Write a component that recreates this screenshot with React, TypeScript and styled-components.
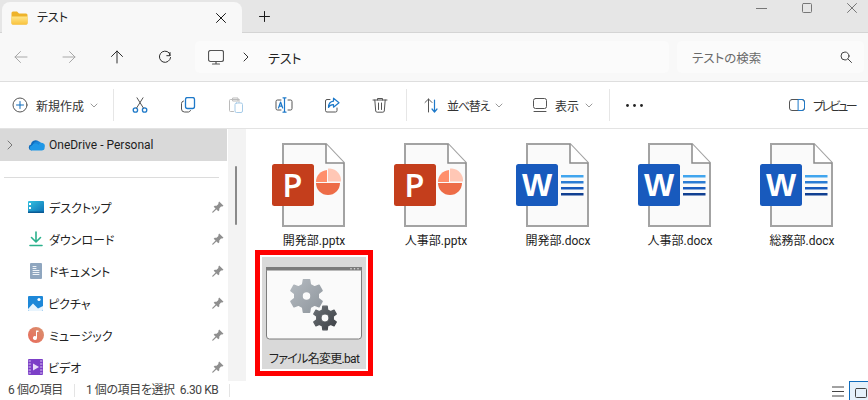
import React from "react";
import styled, { createGlobalStyle } from "styled-components";

const Global = createGlobalStyle`
  html, body { margin: 0; padding: 0; background: #fff; overflow: hidden; }
  * { box-sizing: border-box; }
  body { font-family: Roboto, "Noto Sans CJK JP", sans-serif; font-feature-settings: "palt"; font-size: 12px; color: #1b1b1b; }
`;

const Page = styled.div`width: 868px; height: 400px; display: flex; flex-direction: column; overflow: hidden;`;

const TitleBar = styled.div`height: 33px; flex: none; background: #e6e6e6; border-bottom: 1px solid #d4d4d4; display: flex; align-items: flex-start;`;
const Tab = styled.div`width: 240px; height: 31px; margin: 2px 0 0 2px; background: #f8f8f8; border-radius: 8px 8px 0 0; display: flex; align-items: center; padding: 0 16px 0 9px; position: relative; z-index: 1;`;
const TabTitle = styled.span`flex: 1; margin-left: 9px; font-size: 12px; line-height: 16px; color: #222;`;
const NewTab = styled.div`width: 44px; height: 32px; display: flex; align-items: center; justify-content: center;`;
const WindowControls = styled.div`margin-left: auto; display: flex; gap: 34px; height: 16px; align-items: center; padding-right: 11px; color: #777;`;
const WinBtn = styled.div`width: 11px; display: flex; justify-content: center;`;

const NavRow = styled.div`height: 49px; flex: none; background: #f8f8f8; border-bottom: 1px solid #dedede; display: flex; align-items: center; gap: 6px;`;
const NavBtn = styled.div<{ $off?: boolean }>`width: 42px; display: flex; justify-content: center; color: ${p => (p.$off ? "#a8a8a8" : "#2e2e2e")};`;
const AddressBox = styled.div`width: 474px; height: 32px; margin-left: 3px; background: #fbfbfb; border-radius: 5px; display: flex; align-items: center; padding-left: 13px; color: #333;`;
const Crumb = styled.span`margin-left: 19px; font-size: 13px; color: #222;`;
const Sep = styled.div`margin-left: 19px; display: flex;`;
const SearchBox = styled.div`width: 187px; height: 32px; margin-left: 2px; background: #fbfbfb; border-radius: 5px; display: flex; align-items: center; justify-content: space-between; padding: 0 12px 0 15px; color: #6a6a6a; font-size: 12.5px;`;

const Toolbar = styled.div`height: 47px; flex: none; background: #fff; border-bottom: 1px solid #e3e3e3; display: flex; align-items: center; padding-left: 12px;`;
const ToolText = styled.span<{ $tight?: number }>`margin-left: 8px; font-size: 12px; color: #333; white-space: nowrap; ${p => p.$tight && `letter-spacing: -${p.$tight}px;`}`;
const Chevron = styled.span`margin-left: 6px; display: flex; color: #9a9a9a;`;
const ToolDivider = styled.div`width: 1px; height: 32px; background: #e6e6e6;`;
const IconBtn = styled.div`width: 48px; display: flex; justify-content: center;`;
const ToolGroup = styled.div<{ $w: number; $pad?: number }>`width: ${p => p.$w}px; padding-left: ${p => p.$pad ?? 0}px; display: flex; align-items: center; flex: none;`;

const Body = styled.div`flex: 1; display: flex; min-height: 0;`;
const Sidebar = styled.div`width: 228px; flex: none; overflow: hidden;`;
const DriveRow = styled.div`height: 32px; width: 227px; background: #d9d9d9; display: flex; align-items: center; padding-left: 7px; color: #777;`;
const ChevGap = styled.span`width: 15px;`;
const DriveName = styled.span`margin-left: 4px; font-size: 12px; color: #1e1e1e;`;
const SideDivider = styled.div`height: 1px; margin: 16px 9px 13px 4px; background: #dcdcdc;`;
const SideItem = styled.div`height: 32px; width: 227px; display: flex; align-items: center; padding: 0 3px 0 28px;`;
const SideLabel = styled.span`flex: 1; margin-left: 5px; font-size: 12px; color: #222;`;
const Scrollbar = styled.div`width: 18px; flex: none; background: #f3f3f3; padding: 37px 0 0 7px;`;
const Thumb = styled.div`width: 2px; height: 59px; background: #8a8a8a; border-radius: 1px;`;

const Files = styled.div`flex: 1; display: grid; grid-template-columns: repeat(5, 104px); grid-auto-rows: 112px; column-gap: 18px; row-gap: 6px; padding: 10px 0 0 16px; align-content: start;`;
const Tile = styled.div<{ $selected?: boolean }>`
  display: flex; flex-direction: column; align-items: center;
  background: ${p => (p.$selected ? "#d9d9d9" : "transparent")};
  ${p => p.$selected && "outline: 5px solid #ff0000; outline-offset: 2px;"}
`;
const Thumbnail = styled.div`height: 92px; display: flex; align-items: center; justify-content: center; width: 100%;`;
const FileName = styled.div<{ $selected?: boolean }>`height: 20px; line-height: 20px; font-size: 12px; color: #222; white-space: nowrap; ${p => p.$selected && "letter-spacing: -0.7px;"}`;

const StatusBar = styled.div`height: 19px; flex: none; display: flex; align-items: center; padding-left: 8px; font-size: 12px; color: #444; background: #fff;`;
const StatusCell = styled.span`line-height: 19px; letter-spacing: -0.4px; white-space: pre;`;
const StatusDivider = styled.div`width: 1px; height: 13px; margin: 0 11px; background: #e4e4e4;`;
const ViewSwitch = styled.div`margin-left: auto; display: flex; align-items: flex-start; height: 19px;`;
const ListToggle = styled.div`width: 19px; height: 19px; display: flex; justify-content: flex-start; padding: 5px 0 0 2px; color: #444;`;
const TileToggle = styled.div`width: 19px; height: 19px; border: 1px solid #0f6cbd; border-bottom: 0; border-right: 0; background: #e5f1fb; display: flex; justify-content: flex-end; padding: 6px 1px 0 0; color: #444;`;

type SP = { s?: number; children: React.ReactNode; w?: number; h?: number; vb?: string; sw?: number };
const Ico = ({ s = 16, w, h, vb, sw = 1, children }: SP) => (
  <svg width={w ?? s} height={h ?? s} viewBox={vb ?? `0 0 ${w ?? s} ${h ?? s}`} fill="none" stroke="currentColor" strokeWidth={sw} strokeLinecap="round" strokeLinejoin="round" style={{ display: "block", flex: "none" }}>
    {children}
  </svg>
);

const Folder = () => (
  <Ico w={17} h={14} sw={0}>
    <defs><linearGradient id="fg" x1="0" y1="0" x2="0" y2="1"><stop offset="0" stopColor="#ffe68a" /><stop offset="1" stopColor="#f9c23c" /></linearGradient></defs>
    <path d="M0.5 2a1.5 1.5 0 0 1 1.5-1.5h4l2 2h7A1.5 1.5 0 0 1 16.5 4v8a1.5 1.5 0 0 1-1.5 1.5H2A1.5 1.5 0 0 1 .5 12z" fill="#eeb32a" stroke="none" />
    <path d="M.5 5.5h16V12a1.5 1.5 0 0 1-1.5 1.5H2A1.5 1.5 0 0 1 .5 12z" fill="url(#fg)" stroke="none" />
  </Ico>
);
const XIcon = ({ s = 10 }: { s?: number }) => <Ico s={s}><path d={`M.5.5L${s - .5} ${s - .5}M${s - .5} .5L.5 ${s - .5}`} /></Ico>;
const ArrowL = () => <Ico s={14}><path d="M13 7H1M6.500 1.500L1 7l5.500 5.500" /></Ico>;
const ArrowR = () => <Ico s={14}><path d="M1 7h12M7.500 1.500L13 7l-5.500 5.500" /></Ico>;
const ArrowU = () => <Ico s={14}><path d="M7 13V1M1.500 6.500L7 1l5.500 5.500" /></Ico>;
const Refresh = () => <Ico s={14} ><path d="M12 2.500v3.200H8.800M12.600 7.500A5.600 5.600 0 1 1 11.200 3l.8 2.500" /></Ico>;
const MonitorI = () => (
  <Ico w={16} h={15}><rect x=".5" y=".5" width="15" height="11" rx="2" stroke="#555" strokeWidth="1.2" /><path d="M8 12v1.500M4.500 14h7" stroke="#555" strokeWidth="1.2" /></Ico>
);
const ChevR = () => <Ico w={6} h={10}><path d="M1 1l4 4-4 4" /></Ico>;
const ChevD = () => <Ico w={8} h={5}><path d="M1 1l3 3 3-3" /></Ico>;
const SearchI = () => <Ico s={12}><circle cx="5" cy="5" r="4" stroke="#444" /><path d="M8 8l3.500 3.500" stroke="#444" /></Ico>;

const NewI = () => <Ico s={16}><circle cx="8" cy="8" r="7" stroke="#555" /><path d="M8 4.500v7M4.500 8h7" stroke="#0f6cbd" /></Ico>;
const CutI = () => (
  <Ico s={16}><circle cx="3.400" cy="13" r="2.200" stroke="#1e79c9" strokeWidth="1.300" /><circle cx="12.600" cy="13" r="2.200" stroke="#1e79c9" strokeWidth="1.300" /><path d="M4.600 11L11 .8M11.400 11L5 .8" stroke="#555" /></Ico>
);
const CopyI = () => (
  <Ico s={16}><rect x="5.500" y=".5" width="9" height="11" rx="2" stroke="#1e79c9" strokeWidth="1.300" /><path d="M3.500 4A2.500 2.500 0 0 0 1.500 6.500V12a3 3 0 0 0 3 3h4a2.500 2.500 0 0 0 2-1.500" stroke="#555" /></Ico>
);
const PasteI = () => (
  <Ico s={16}><path d="M5 2.500H2.500a1 1 0 0 0-1 1v10a1 1 0 0 0 1 1h3" stroke="#bbb" /><path d="M5 2.500h6M11 2.500v3M5 1h5v3H5z" stroke="#bbb" /><rect x="7" y="6" width="7.500" height="9.500" rx="1.500" stroke="#a6cbe8" /></Ico>
);
const RenameI = () => (
  <Ico w={18} h={16}><path d="M6 3H2.500A1.500 1.500 0 0 0 1 4.500v7A1.500 1.500 0 0 0 2.500 13H6M13 3h2.500A1.500 1.500 0 0 1 17 4.500v7a1.500 1.500 0 0 1-1.500 1.500H13" stroke="#555" /><path d="M9.500 1v14M8 .8h3M8 15.200h3M3.500 11L5.600 5 7.700 11M4.200 9.200h2.800" stroke="#1e79c9" strokeWidth="1.200" /></Ico>
);
const ShareI = () => (
  <Ico s={16}><path d="M6 2.500H3A1.500 1.500 0 0 0 1.500 4v9.500A1.500 1.500 0 0 0 3 15h8.500a1.500 1.500 0 0 0 1.500-1.500V11" stroke="#555" /><path d="M9.500 1.200l5.500 4.500-5.500 4.500V7.600C7 7.500 5.500 8.400 4.500 10.500c0-4 2-6 5-6.300z" stroke="#1e79c9" strokeWidth="1.200" /></Ico>
);
const TrashI = () => (
  <Ico s={16}><path d="M1 3h14M5.500 3V1.500h5V3M2.800 3l.9 11a1.500 1.500 0 0 0 1.500 1.200h5.600a1.500 1.500 0 0 0 1.500-1.200l.9-11M6.500 6v6.500M9.500 6v6.500" stroke="#555" /></Ico>
);
const SortI = () => (
  <Ico w={15} h={15}><path d="M4.500 14V1M1 4.500L4.500 1 8 4.500" stroke="#555" /><path d="M10.500 2v12M8 11l2.500 3 2.500-3" stroke="#1e79c9" strokeWidth="1.200" /></Ico>
);
const ViewI = () => <Ico s={14}><rect x=".5" y=".5" width="13" height="10" rx="2" stroke="#555" /><path d="M1 13.500h12" stroke="#555" /></Ico>;
const MoreI = () => <svg width={17} height={3} style={{ display: "block" }}><circle cx="1.5" cy="1.5" r="1.4" fill="#222" /><circle cx="8.5" cy="1.5" r="1.4" fill="#222" /><circle cx="15.5" cy="1.5" r="1.4" fill="#222" /></svg>;
const PreviewI = () => <Ico w={16} h={12}><rect x=".5" y=".5" width="15" height="11" rx="2.500" stroke="#555" /><path d="M9.500.5h3.500a2.500 2.500 0 0 1 2.500 2.500v6a2.500 2.500 0 0 1-2.500 2.500H9.500z" stroke="#1e79c9" /></Ico>;

const Cloud = () => (
  <Ico w={17} h={12} sw={0}>
    <path d="M3.500 11.500A3 3 0 0 1 3 5.600 4.600 4.600 0 0 1 11.400 3.400" fill="#0f6cbd" />
    <path d="M5 5.400A4.600 4.600 0 0 1 11.200 2.600 3.600 3.600 0 0 1 13.600 6L8 9z" fill="#1a86d9" />
    <path d="M3.500 11.500A2.600 2.600 0 0 1 4 6.500 4 4 0 0 1 10.500 6 3 3 0 0 1 16.600 8.200 2.800 2.800 0 0 1 14 11.500z" fill="#1f97e6" />
  </Ico>
);
const PinI = () => (
  <Ico s={12} sw={0}>
    <path d="M7.200.5L11.500 4.800 10.300 5.600 9 5.600 7.300 7.400 7.300 9.300 6.300 10.300 1.700 5.700 2.700 4.700 4.600 4.700 6.400 3 6.400 1.700z" fill="#8f8f8f" />
    <path d="M4 8L.8 11.200" stroke="#8f8f8f" strokeWidth="1.200" />
  </Ico>
);

const DesktopI = () => (
  <Ico w={16} h={12} sw={0}>
    <defs><linearGradient id="dg" x1="0" y1="0" x2="1" y2="1"><stop offset="0" stopColor="#35c2e0" /><stop offset="1" stopColor="#0b6fb5" /></linearGradient></defs>
    <rect width="16" height="12" rx="1" fill="url(#dg)" />
    <rect x="1" y="2" width="2" height="2" fill="#fff" /><rect x="1" y="6" width="2" height="2" fill="#fff" />
    <rect x="0" y="10.500" width="16" height="1.500" fill="#0a5a94" />
  </Ico>
);
const DownloadI = () => (
  <Ico s={16} sw={1.6}><path d="M8 1v9.500M3.500 6.500L8 11l4.500-4.500M2 14.500h12" stroke="#2bb18c" /></Ico>
);
const DocumentI = () => (
  <Ico s={16} sw={0}>
    <rect x="2" y="0" width="12" height="16" rx="1" fill="#8fa6bf" />
    <path d="M5 3.500h3M5 5.500h3M5 7.500h6M5 9.500h6M5 11.500h6" stroke="#eef3f8" strokeWidth="1" />
  </Ico>
);
const PictureI = () => (
  <Ico w={15} h={15} sw={0}>
    <rect width="15" height="15" rx="1" fill="#1e88d8" />
    <path d="M0 13L5 7.500 10 12.500 15 10v3.500a1.500 1.500 0 0 1-1.500 1.500h-12A1.500 1.500 0 0 1 0 13.500z" fill="#e8f4fd" />
    <circle cx="11" cy="3.500" r="1.600" fill="#fff" />
  </Ico>
);
const MusicI = () => (
  <Ico s={16} sw={0}>
    <defs><linearGradient id="mg" x1="0" y1="1" x2="1" y2="0"><stop offset="0" stopColor="#e9695a" /><stop offset="1" stopColor="#d9926f" /></linearGradient></defs>
    <circle cx="8" cy="8" r="8" fill="url(#mg)" />
    <path d="M8 3.500h2.500V5H9v6a2 2 0 1 1-1-1.700z" fill="#fff" />
  </Ico>
);
const VideoI = () => (
  <Ico w={15} h={16} sw={0}>
    <rect width="15" height="16" rx="1" fill="#7c3fc7" />
    <path d="M1 2h1.500M1 5h1.500M1 8h1.500M1 11h1.500M1 14h1.500M12.500 2H14M12.500 5H14M12.500 8H14M12.500 11H14M12.500 14H14" stroke="#d8c6f0" strokeWidth="1" />
    <path d="M5 4.500l6 3.500-6 3.500z" fill="#e9dcfa" />
  </Ico>
);

const Doc = () => (
  <>
    <path d="M11 1h43l18 19v63H11z" fill="#fafafa" stroke="#a3a3a3" strokeWidth="2" />
    <path d="M54 1v19h18" fill="#fff" stroke="#8a8a8a" strokeWidth="1.500" />
  </>
);
const PptIcon = () => (
  <svg width={84} height={84} viewBox="0 0 84 84" style={{ display: "block" }}>
    <Doc />
    <rect x="0" y="21" width="42" height="42" rx="2.500" fill="#c43e1c" />
    <text x="20.500" y="54" textAnchor="middle" fontFamily="'Open Sans', sans-serif" fontWeight="600" fontSize="33" fill="#fff">P</text>
    <path d="M56 25.500h2a12 12 0 0 1 11 13H56z" fill="#ffc7b5" />
    <path d="M55 27a12 12 0 0 0-11 12h11z" fill="#ff8f6b" />
    <path d="M44 40h24a12 12 0 0 1-24 0z" fill="#ed6c47" />
  </svg>
);
const WordIcon = () => (
  <svg width={84} height={84} viewBox="0 0 84 84" style={{ display: "block" }}>
    <Doc />
    <rect x="0" y="21" width="42" height="42" rx="2.500" fill="#185abd" />
    <text x="21" y="53" textAnchor="middle" fontFamily="'Liberation Sans', sans-serif" fontWeight="700" fontSize="32" fill="#fff">W</text>
    <rect x="45" y="32" width="22.500" height="2.500" fill="#41a5ee" />
    <rect x="45" y="38" width="22.500" height="2.500" fill="#2b7cd3" />
    <rect x="45" y="44" width="22.500" height="2.500" fill="#185abd" />
    <rect x="45" y="50" width="22.500" height="2.500" fill="#103f91" />
  </svg>
);

const gearPath = (cx: number, cy: number, R: number, r: number, hole: number) => {
  const pts: string[] = [];
  const n = 6;
  for (let i = 0; i < n; i++) {
    const a = (i / n) * Math.PI * 2 - Math.PI / 2;
    const w = Math.PI / n;
    const seq: [number, number][] = [[r, a - w * 0.62], [R, a - w * 0.36], [R, a + w * 0.36], [r, a + w * 0.62]];
    seq.forEach(([rad, ang]) => pts.push(`${(cx + rad * Math.cos(ang)).toFixed(2)} ${(cy + rad * Math.sin(ang)).toFixed(2)}`));
  }
  return `M${pts.join("L")}Z M${cx + hole} ${cy}a${hole} ${hole} 0 1 0 ${-2 * hole} 0a${hole} ${hole} 0 1 0 ${2 * hole} 0Z`;
};

const BatIcon = () => (
  <svg width={96} height={73} viewBox="0 0 96 73" style={{ display: "block" }}>
    <defs>
      <linearGradient id="g1" x1="0" y1="0" x2="1" y2="1"><stop offset="0" stopColor="#b4bac0" /><stop offset="1" stopColor="#8f969d" /></linearGradient>
      <linearGradient id="g2" x1="0" y1="0" x2="1" y2="1"><stop offset="0" stopColor="#6a6f74" /><stop offset="1" stopColor="#3c4045" /></linearGradient>
    </defs>
    <rect x=".5" y=".5" width="95" height="71.500" rx="3" fill="#fafafa" stroke="#7d7d7d" />
    <rect x="0" y="0" width="96" height="3.500" fill="#7b7b7b" />
    <circle cx="85" cy="1.800" r=".8" fill="#ddd" /><circle cx="88.500" cy="1.800" r=".8" fill="#ddd" /><circle cx="92" cy="1.800" r=".8" fill="#ddd" />
    <path d={gearPath(40.5, 29, 16.5, 12, 4.5)} fill="url(#g1)" fillRule="evenodd" stroke="url(#g1)" strokeWidth="1.500" strokeLinejoin="round" />
    <path d={gearPath(59, 51, 12, 8.5, 4)} fill="url(#g2)" fillRule="evenodd" stroke="url(#g2)" strokeWidth="1.200" strokeLinejoin="round" />
  </svg>
);

const navItems: [React.ReactNode, string][] = [
  [<DesktopI />, "デスクトップ"],
  [<DownloadI />, "ダウンロード"],
  [<DocumentI />, "ドキュメント"],
  [<PictureI />, "ピクチャ"],
  [<MusicI />, "ミュージック"],
  [<VideoI />, "ビデオ"],
];

const files: [React.ReactNode, string, boolean][] = [
  [<PptIcon />, "開発部.pptx", false],
  [<PptIcon />, "人事部.pptx", false],
  [<WordIcon />, "開発部.docx", false],
  [<WordIcon />, "人事部.docx", false],
  [<WordIcon />, "総務部.docx", false],
  [<BatIcon />, "ファイル名変更.bat", true],
];

export default function App() {
  return (
    <Page>
      <Global />
      <TitleBar>
        <Tab>
          <Folder />
          <TabTitle>テスト</TabTitle>
          <XIcon />
        </Tab>
        <NewTab><Ico s={11}><path d="M5.500.5v10M.5 5.500h10" /></Ico></NewTab>
        <WindowControls>
          <WinBtn><Ico w={11} h={1}><path d="M0 .5h11" /></Ico></WinBtn>
          <WinBtn><Ico s={10}><rect x=".5" y=".5" width="9" height="9" rx="1" /></Ico></WinBtn>
          <WinBtn><XIcon /></WinBtn>
        </WindowControls>
      </TitleBar>
      <NavRow>
        <NavBtn $off><ArrowL /></NavBtn>
        <NavBtn $off><ArrowR /></NavBtn>
        <NavBtn><ArrowU /></NavBtn>
        <NavBtn><Refresh /></NavBtn>
        <AddressBox>
          <MonitorI />
          <Sep><ChevR /></Sep>
          <Crumb>テスト</Crumb>
        </AddressBox>
        <SearchBox>
          テストの検索
          <SearchI />
        </SearchBox>
      </NavRow>
      <Toolbar>
        <ToolGroup $w={101}>
          <NewI />
          <ToolText>新規作成</ToolText>
          <Chevron><ChevD /></Chevron>
        </ToolGroup>
        <ToolDivider />
        <ToolGroup $w={292} $pad={2}>
          <IconBtn><CutI /></IconBtn>
          <IconBtn><CopyI /></IconBtn>
          <IconBtn><PasteI /></IconBtn>
          <IconBtn><RenameI /></IconBtn>
          <IconBtn><ShareI /></IconBtn>
          <IconBtn><TrashI /></IconBtn>
        </ToolGroup>
        <ToolDivider />
        <ToolGroup $w={126} $pad={17}>
          <SortI />
          <ToolText $tight={1.2}>並べ替え</ToolText>
          <Chevron><ChevD /></Chevron>
        </ToolGroup>
        <ToolGroup $w={76}>
          <ViewI />
          <ToolText>表示</ToolText>
          <Chevron><ChevD /></Chevron>
        </ToolGroup>
        <ToolDivider />
        <ToolGroup $w={179} $pad={16}><MoreI /></ToolGroup>
        <ToolGroup $w={70}>
          <PreviewI />
          <ToolText $tight={2.5}>プレビュー</ToolText>
        </ToolGroup>
      </Toolbar>
      <Body>
        <Sidebar>
          <DriveRow>
            <ChevR />
            <ChevGap />
            <Cloud />
            <DriveName>OneDrive - Personal</DriveName>
          </DriveRow>
          <SideDivider />
          {navItems.map(([icon, label]) => (
            <SideItem key={label}>
              {icon}
              <SideLabel>{label}</SideLabel>
              <PinI />
            </SideItem>
          ))}
        </Sidebar>
        <Scrollbar><Thumb /></Scrollbar>
        <Files>
          {files.map(([icon, name, sel]) => (
            <Tile key={name} $selected={sel}>
              <Thumbnail>{icon}</Thumbnail>
              <FileName $selected={sel}>{name}</FileName>
            </Tile>
          ))}
        </Files>
      </Body>
      <StatusBar>
        <StatusCell>6 個の項目</StatusCell>
        <StatusDivider />
        <StatusCell>1 個の項目を選択  6.30 KB</StatusCell>
        <StatusDivider />
        <ViewSwitch>
          <ListToggle><Ico w={12} h={11}><path d="M0 1h12M0 5.500h12M0 10h12" /></Ico></ListToggle>
          <TileToggle><Ico w={12} h={13}><rect x=".5" y=".5" width="11" height="9" rx="1" /><path d="M0 12.500h12" /></Ico></TileToggle>
        </ViewSwitch>
      </StatusBar>
    </Page>
  );
}
